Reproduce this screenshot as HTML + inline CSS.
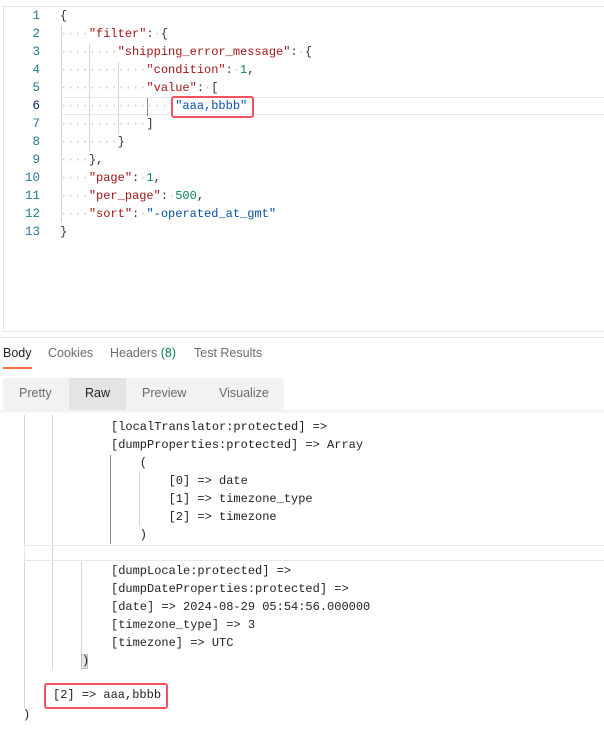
<!DOCTYPE html>
<html><head><meta charset="utf-8"><style>
*{margin:0;padding:0;box-sizing:border-box}
body{width:604px;height:743px;background:#fff;position:relative;overflow:hidden;font-family:"Liberation Sans",sans-serif}
.m{font-family:"Liberation Mono",monospace;font-size:12px;white-space:pre;position:absolute;line-height:18px}
.ln{position:absolute;left:14px;width:26px;text-align:right;color:#237893;font-family:"Liberation Mono",monospace;font-size:12.5px;line-height:18px}
.k{color:#a31515}.s{color:#0451a5}.n{color:#098658}.p{color:#333}.d{color:#ccc}
.v{position:absolute;width:1px;background:#d4d4d4}
.r{color:#222}
</style></head><body>
<div style="position:absolute;left:3px;top:6px;width:610px;height:326px;border:1px solid #e6e6e6;border-right:none"></div>
<div style="position:absolute;left:61px;top:97px;width:560px;height:18px;border:1px solid #e8e8e8;border-right:none"></div>
<div style="position:absolute;left:0;top:337px;width:604px;height:1px;background:#e6e6e6"></div>
<div class="ln" style="top:7px">1<br>2<br>3<br>4<br>5<br><span style="color:#0b216f">6</span><br>7<br>8<br>9<br>10<br>11<br>12<br>13</div>
<div class="v" style="left:61px;top:26px;height:196px"></div>
<div class="v" style="left:89px;top:44px;height:108px"></div>
<div class="v" style="left:118px;top:62px;height:72px"></div>
<div class="v" style="left:147px;top:98px;height:18px;background:#888"></div>
<div class="m p" style="left:60px;top:7px">{
<span class="d">····</span><span class="k">"filter"</span>:<span class="d">·</span>{
<span class="d">········</span><span class="k">"shipping_error_message"</span>:<span class="d">·</span>{
<span class="d">············</span><span class="k">"condition"</span>:<span class="d">·</span><span class="n">1</span>,
<span class="d">············</span><span class="k">"value"</span>:<span class="d">·</span>[
<span class="d">················</span><span class="s">"aaa,bbbb"</span>
<span class="d">············</span>]
<span class="d">········</span>}
<span class="d">····</span>},
<span class="d">····</span><span class="k">"page"</span>:<span class="d">·</span><span class="n">1</span>,
<span class="d">····</span><span class="k">"per_page"</span>:<span class="d">·</span><span class="n">500</span>,
<span class="d">····</span><span class="k">"sort"</span>:<span class="d">·</span><span class="s">"-operated_at_gmt"</span>
}</div>
<div style="position:absolute;left:171px;top:96px;width:83px;height:22px;border:2.5px solid #f0525f;border-radius:3px"></div>

<div style="position:absolute;top:346px;left:3px;font-size:12.5px;color:#6b6b6b;white-space:nowrap">
<span style="color:#212121;position:absolute;left:0">Body</span>
<span style="position:absolute;left:45px">Cookies</span>
<span style="position:absolute;left:107px">Headers <span style="color:#0a7d4c">(8)</span></span>
<span style="position:absolute;left:191px">Test Results</span></div>
<div style="position:absolute;left:3px;top:367px;width:29px;height:2px;background:#ff6c37"></div>
<div style="position:absolute;left:3px;top:378px;width:281px;height:32px;background:#f2f2f2;border-radius:4px;font-size:12.5px;color:#6b6b6b">
<div style="position:absolute;left:66px;top:0;width:57px;height:32px;background:#e4e4e4"></div>
<span style="position:absolute;left:16px;top:8px">Pretty</span>
<span style="position:absolute;left:82px;top:8px;color:#212121">Raw</span>
<span style="position:absolute;left:139px;top:8px">Preview</span>
<span style="position:absolute;left:216px;top:8px">Visualize</span></div>
<div style="position:absolute;left:0;top:410px;width:604px;height:4px;background:linear-gradient(#eee,#fff)"></div>

<div class="v" style="left:24px;top:415px;height:293px"></div>
<div class="v" style="left:52px;top:415px;height:254px"></div>
<div class="v" style="left:81px;top:561px;height:100px"></div>
<div class="v" style="left:110px;top:455px;height:89px;background:#888"></div>
<div class="v" style="left:139px;top:472px;height:54px"></div>
<div style="position:absolute;left:24px;top:545px;width:590px;height:16px;border:1px solid #e8e8e8;border-right:none"></div>
<div style="position:absolute;left:81px;top:654px;width:7px;height:15px;background:#e4e8e0;border:1px solid #bbb"></div>
<div class="m r" style="left:111px;top:418px">[localTranslator:protected] =&gt;
[dumpProperties:protected] =&gt; Array
    (
        [0] =&gt; date
        [1] =&gt; timezone_type
        [2] =&gt; timezone
    )</div>
<div class="m r" style="left:111px;top:562px">[dumpLocale:protected] =&gt;
[dumpDateProperties:protected] =&gt;
[date] =&gt; 2024-08-29 05:54:56.000000
[timezone_type] =&gt; 3
[timezone] =&gt; UTC</div>
<div class="m r" style="left:82px;top:652px">)</div>
<div class="m r" style="left:53px;top:686px">[2] =&gt; aaa,bbbb</div>
<div class="m r" style="left:23px;top:706px">)</div>
<div style="position:absolute;left:44px;top:683px;width:124px;height:26px;border:2.5px solid #f0525f;border-radius:3px"></div>
</body></html>
